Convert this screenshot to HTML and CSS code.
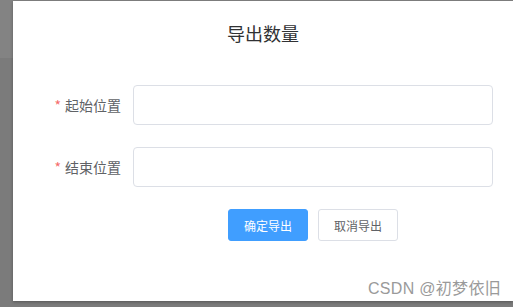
FILE: index.html
```html
<!DOCTYPE html>
<html lang="zh-CN">
<head>
    <meta charset="utf-8">
    <link rel="stylesheet" href="styles.css">
</head>
<body>
    <div class="backdrop">
        <div class="dialog">
            <div class="dialog-header">导出数量</div>
            <div class="dialog-body">
                <div class="form-item">
                    <label class="form-label"><span class="required">*</span>起始位置</label>
                    <input class="form-input" type="text">
                </div>
                <div class="form-item">
                    <label class="form-label"><span class="required">*</span>结束位置</label>
                    <input class="form-input" type="text">
                </div>
                <div class="form-actions">
                    <button class="btn btn-primary">确定导出</button>
                    <button class="btn">取消导出</button>
                </div>
            </div>
            <div class="watermark">CSDN @初梦依旧</div>
        </div>
    </div>
</body>
</html>
```

FILE: styles.css
```css
* {
    box-sizing: border-box;
}

body {
    margin: 0;
    font-family: "Noto Sans CJK SC", "Noto Sans", sans-serif;
    background: #7b7b7b;
}

.backdrop {
    width: 513px;
    height: 307px;
    padding: 1px 0 0 13px;
    background: linear-gradient(#838383 0, #838383 58px, #7b7b7b 58px);
    overflow: hidden;
}

.dialog {
    position: relative;
    width: 500px;
    height: 300px;
    background: #fff;
    box-shadow: 0 1px 3px rgba(0, 0, 0, 0.3);
}

.dialog-header {
    height: 64px;
    padding-top: 19px;
    text-align: center;
    font-size: 18px;
    line-height: 26px;
    color: #303133;
}

.dialog-body {
    padding-top: 20px;
}

.form-item {
    display: flex;
    align-items: center;
    height: 40px;
    margin-bottom: 22px;
}

.form-label {
    width: 120px;
    padding-right: 12px;
    text-align: right;
    font-size: 14px;
    color: #606266;
}

.required {
    color: #f56c6c;
    margin-right: 4px;
}

.form-input {
    width: 360px;
    height: 40px;
    border: 1px solid #dcdfe6;
    border-radius: 4px;
    outline: none;
    padding: 0 15px;
}

.form-actions {
    display: flex;
    justify-content: center;
    gap: 10px;
    padding-left: 100px;
    margin-top: 5px;
}

.btn {
    width: 80px;
    height: 32px;
    border: 1px solid #dcdfe6;
    border-radius: 3px;
    background: #fff;
    color: #606266;
    font-family: inherit;
    font-size: 12px;
    padding: 0;
}

.btn-primary {
    background: #409eff;
    border-color: #409eff;
    color: #fff;
}

.watermark {
    position: absolute;
    right: 12px;
    bottom: 2px;
    font-size: 16px;
    color: #9a9a9a;
    font-family: "Liberation Sans", "Noto Sans CJK SC", sans-serif;
    letter-spacing: 0.3px;
}
```
